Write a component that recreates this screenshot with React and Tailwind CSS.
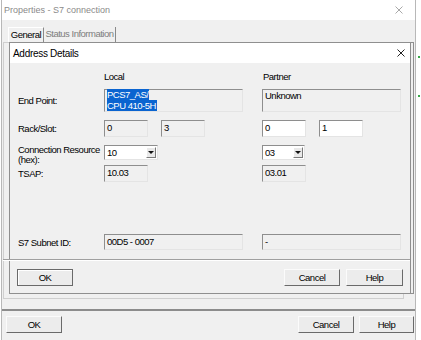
import React from "react";

const sunken =
  "border border-t-[#8e8e8e] border-l-[#8e8e8e] border-r-[#e4e4e4] border-b-[#e4e4e4]";

function CloseX({ color = "#222", size = 8 }) {
  return (
    <svg width={size} height={size} viewBox="0 0 8 8">
      <path d="M0.5 0.5L7.5 7.5M7.5 0.5L0.5 7.5" stroke={color} strokeWidth="1" />
    </svg>
  );
}

function Field({ children, width, height, white, className = "" }) {
  return (
    <div
      className={`${sunken} ${white ? "bg-white" : "bg-[#f0f0f0]"} pl-[2px] leading-[10px] ${className}`}
      style={{ width, height }}
    >
      {children}
    </div>
  );
}

function Select({ value, width }) {
  return (
    <div
      className={`${sunken} bg-white h-[15px] flex items-center justify-between pl-[2px] pr-[1px]`}
      style={{ width }}
    >
      <span className="leading-[11px]">{value}</span>
      <div className="w-[10px] h-[11px] bg-[#e9e9e9] border border-t-white border-l-white border-r-[#7a7a7a] border-b-[#7a7a7a] flex items-center justify-center">
        <svg width="6" height="3" viewBox="0 0 6 3">
          <path d="M0 0H6L3 3Z" fill="#111" />
        </svg>
      </div>
    </div>
  );
}

function Button({ children, width, primary }) {
  return (
    <div
      className={`h-[17px] flex items-center justify-center bg-[#ececec] leading-none ${
        primary
          ? "border border-[#6a6a6a] shadow-[inset_1px_1px_0_#ffffff]"
          : "border border-t-[#fbfbfb] border-l-[#fbfbfb] border-r-[#6a6a6a] border-b-[#6a6a6a]"
      }`}
      style={{ width }}
    >
      {children}
    </div>
  );
}

function Row({ label, className = "", height, children }) {
  return (
    <div className={`flex ${className}`} style={{ height }}>
      <div className="w-[86px] flex items-center pt-[2px]">{label}</div>
      {children}
    </div>
  );
}

export default function App() {
  return (
    <div
      className="relative w-[421px] h-[340px] bg-white overflow-hidden text-[9.5px] tracking-[-0.5px] text-black whitespace-nowrap"
      style={{ fontFamily: '"Liberation Sans", Arial, sans-serif' }}
    >
      {/* outer window */}
      <div className="absolute left-[1px] top-0 w-[415px] h-[345px] border-x border-[#b8b8b8] bg-[#f0f0f0]">
        <div className="h-[20px] bg-white flex items-center justify-between pl-[2px] pr-[12px] text-[9px] tracking-normal text-[#8a8a8a]">
          <span className="pt-[2px]">Properties - S7 connection</span>
          <CloseX color="#a8a8a8" size={8} />
        </div>

        <div className="h-[22px] pt-[7px] pl-[6px] flex">
          <div className="w-[36px] h-[15px] border-t border-l border-r border-t-white border-l-white border-r-[#8a8a8a] flex items-center justify-center">
            General
          </div>
          <div className="w-[72px] h-[15px] border-r border-[#8a8a8a] flex items-center justify-center text-[#7d7d7d]">
            Status Information
          </div>
        </div>

        <div className="relative h-[267px]">
          <div className="absolute left-[1px] top-0 w-[401px] h-[257px] border border-[#cfcfcf]" />

          {/* inner dialog */}
          <div className="relative ml-[7px] w-[405px] h-[252px] border border-[#8f8f8f] bg-[#f0f0f0] pr-[2px]">
            <div className="h-full border-r border-[#8f8f8f]">
              <div className="h-[20px] bg-white flex items-center justify-between pl-[3px] pr-[5px] text-[10px] tracking-[-0.3px]">
                <span>Address Details</span>
                <CloseX />
              </div>

              <div className="pl-[8px]">
                <div className="flex mt-[8px] h-[12px] items-center">
                  <div className="w-[86px]" />
                  <div className="w-[158px]">Local</div>
                  <div className="pl-[1px]">Partner</div>
                </div>

                <Row label="End Point:" className="mt-[6px]" height={23}>
                  <Field width={139} height={23} className="!leading-[10.5px]">
                    <span className="bg-[#0a64d0] text-white pr-[1px]">PCS7_AS/</span>
                    <br />
                    <span className="bg-[#0a64d0] text-white pr-[1px]">CPU 410-5H</span>
                  </Field>
                  <Field width={139} height={23} className="ml-[19px] pt-[1px]">
                    Unknown
                  </Field>
                </Row>

                <Row label="Rack/Slot:" className="mt-[8px]" height={17}>
                  <Field width={44} height={17} className="pt-[2px]">0</Field>
                  <Field width={44} height={17} className="ml-[13px] pt-[2px]">3</Field>
                  <Field width={44} height={17} white className="ml-[57px] pt-[2px]">0</Field>
                  <Field width={44} height={17} white className="ml-[13px] pt-[2px]">1</Field>
                </Row>

                <div className="flex mt-[8px] h-[15px]">
                  <div className="w-[86px] leading-[10px]">
                    Connection Resource
                    <br />
                    (hex):
                  </div>
                  <Select value="10" width={54} />
                  <div className="ml-[104px]">
                    <Select value="03" width={43} />
                  </div>
                </div>

                <Row label="TSAP:" className="mt-[5px]" height={17}>
                  <Field width={44} height={17} className="pt-[2px]">10.03</Field>
                  <Field width={44} height={17} className="ml-[114px] pt-[2px]">03.01</Field>
                </Row>

                <Row label="S7 Subnet ID:" className="mt-[52px]" height={16}>
                  <Field width={139} height={16} className="pt-[2px]">00D5 - 0007</Field>
                  <Field width={139} height={16} className="ml-[19px] pt-[2px]">-</Field>
                </Row>
              </div>

              <div className="mt-[9px] ml-[-7px] h-[2px] border-t border-b border-t-[#a0a0a0] border-b-white" />

              <div className="mt-[8px] flex justify-between pl-[7px] pr-[7px]">
                <Button width={56} primary>OK</Button>
                <div className="flex gap-[6px]">
                  <Button width={56}>Cancel</Button>
                  <Button width={57}>Help</Button>
                </div>
              </div>
            </div>
          </div>
        </div>

        <div className="h-[2px] bg-[#8c8c8c]" />

        <div className="mt-[5px] flex justify-between pl-[4px] pr-[1px]">
          <Button width={56}>OK</Button>
          <div className="flex gap-[5px]">
            <Button width={56}>Cancel</Button>
            <Button width={55}>Help</Button>
          </div>
        </div>
      </div>

      <div className="absolute left-[418px] top-[56px] w-[2px] h-[2px] bg-[#3aa84a]" />
      <div className="absolute left-[418px] top-[95px] w-[2px] h-[2px] bg-[#3aa84a]" />
    </div>
  );
}
